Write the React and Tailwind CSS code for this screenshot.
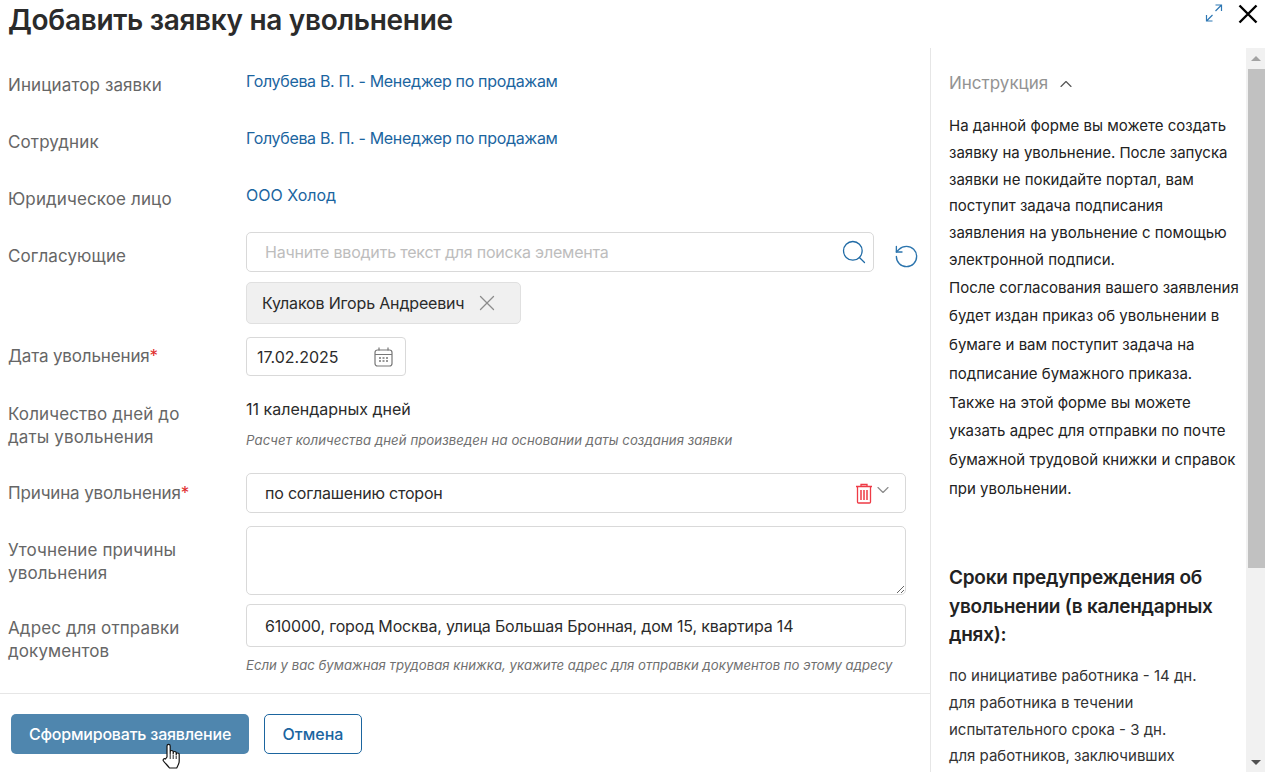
import React from "react";
import { Search, RotateCcw, ChevronUp, ChevronDown, X } from "lucide-react";

const Label = ({ children, required }) => (
  <div
    className={`w-[246px] shrink-0 pl-2 pr-12 text-[17px] leading-[23px] text-[#666666] ${
      required ? "tracking-[-0.15px]" : "tracking-[0.12px]"
    }`}
  >
    {children}
    {required && <span className="text-[#e02b2b]">*</span>}
  </div>
);

const LinkValue = ({ children }) => (
  <a className="text-[16px] leading-6 tracking-[-0.33px] text-[#1b659f]">{children}</a>
);

const ExpandIcon = () => (
  <svg width="18" height="18" viewBox="0 0 18 18" fill="none" stroke="#2f78b4" strokeWidth="1.2">
    <path d="M10.5 1h6v6M16.5 1l-6 6" />
    <path d="M1.5 11v6h6M1.5 17l6-6" />
  </svg>
);

const CloseIcon = () => (
  <svg width="20" height="20" viewBox="0 0 20 20" fill="none" stroke="#000000" strokeWidth="2.4">
    <path d="M1.5 1.5l17 17M18.5 1.5l-17 17" />
  </svg>
);

const CalendarIcon = () => (
  <svg width="19" height="20" viewBox="0 0 19 20" fill="none" stroke="#777777" strokeWidth="1.2">
    <rect x="1" y="3" width="17" height="16" rx="2.5" />
    <path d="M1 7.5h17M5 .5v3M14 .5v3" />
    <path d="M5 11h2M8.500 11h2M12 11h2M5 14h2M8.500 14h2M12 14h2" strokeWidth="1.500" />
  </svg>
);

const TrashIcon = () => (
  <svg width="18" height="21" viewBox="0 0 18 21" fill="none" stroke="#ee3b46" strokeWidth="1.300">
    <path d="M1 3.500h16M6 3.500V1.500h6v2" />
    <path d="M2.500 3.500v15.500a1 1 0 0 0 1 1h11a1 1 0 0 0 1-1V3.500" />
    <path d="M6 7v10M9 7v10M12 7v10" strokeWidth="1.500" />
  </svg>
);

const HandCursor = () => (
  <svg
    width="19"
    height="26"
    viewBox="0 0 19 26"
    className="absolute left-[162px] top-[743px]"
    fill="#ffffff"
    stroke="#111111"
    strokeWidth="1.200"
    strokeLinejoin="round"
  >
    <path d="M5 14V3a1.600 1.600 0 0 1 3.200 0v7.500V9a1.500 1.500 0 0 1 3 0v2V10a1.500 1.500 0 0 1 3 0v2V11.500a1.500 1.500 0 0 1 3 0V18c0 3-1.500 5-2.500 7H7.500C6 23 3.500 20.500 1.500 18c-1-1.500.5-3 2-2z" />
    <path d="M8.200 11v5M11.200 12v4M14.200 13v3" fill="none" strokeWidth="0.900" />
  </svg>
);

const Scrollbar = () => (
  <div className="w-[19px] shrink-0 flex flex-col items-end bg-[#f1f1f1]">
    <div className="w-full h-[21px] flex items-center justify-center">
      <div className="w-0 h-0 border-x-[5px] border-x-transparent border-b-[5px] border-b-[#a3a3a3]" />
    </div>
    <div className="w-[17px] h-[499px] bg-[#c1c1c1]" />
    <div className="flex-1" />
    <div className="w-full h-[19px] flex items-center justify-center">
      <div className="w-0 h-0 border-x-[5px] border-x-transparent border-t-[5px] border-t-[#505050]" />
    </div>
  </div>
);

const intro = [
  "На данной форме вы можете создать",
  "заявку на увольнение. После запуска",
  "заявки не покидайте портал, вам",
  "поступит задача подписания",
  "заявления на увольнение с помощью",
  "электронной подписи.",
];

const instruction = [
  "После согласования вашего заявления",
  "будет издан приказ об увольнении в",
  "бумаге и вам поступит задача на",
  "подписание бумажного приказа.",
  "Также на этой форме вы можете",
  "указать адрес для отправки по почте",
  "бумажной трудовой книжки и справок",
  "при увольнении.",
];

const terms = [
  "по инициативе работника - 14 дн.",
  "для работника в течении",
  "испытательного срока - 3 дн.",
  "для работников, заключивших",
];

export default function App() {
  return (
    <div
      className="relative h-[772px] w-full overflow-hidden bg-white flex flex-col"
      style={{ fontFamily: "Inter, 'Noto Sans', sans-serif" }}
    >
      {/* header */}
      <div className="h-[48px] shrink-0 flex items-start justify-between pl-2 pr-[7px]">
        <h1 className="text-[28px] leading-[40px] tracking-[-0.31px] font-semibold text-[#2b2b2b]">
          Добавить заявку на увольнение
        </h1>
        <div className="flex items-start gap-[15px] pt-1">
          <ExpandIcon />
          <CloseIcon />
        </div>
      </div>

      <div className="flex-1 flex min-h-0">
        {/* form column */}
        <div className="w-[930px] shrink-0 flex flex-col">
          <div className="flex-1">
            <div className="h-[57px] flex pt-[26px]">
              <Label>Инициатор заявки</Label>
              <div className="-mt-[5px]"><LinkValue>Голубева В. П. - Менеджер по продажам</LinkValue></div>
            </div>
            <div className="h-[57px] flex pt-[26px]">
              <Label>Сотрудник</Label>
              <div className="-mt-[5px]"><LinkValue>Голубева В. П. - Менеджер по продажам</LinkValue></div>
            </div>
            <div className="h-[57px] flex pt-[26px]">
              <Label>Юридическое лицо</Label>
              <div className="-mt-[5px]">
                <a className="text-[16px] leading-6 text-[#1b659f]">ООО Холод</a>
              </div>
            </div>

            <div className="flex mt-[13px]">
              <div className="pt-[13px]"><Label>Согласующие</Label></div>
              <div className="flex-1 min-w-0">
                <div className="flex items-center">
                  <div className="w-[628px] h-[40px] shrink-0 border border-[#d9d9d9] rounded-[5px] flex items-center pl-[18px] pr-[5px]">
                    <input
                      placeholder="Начните вводить текст для поиска элемента"
                      className="flex-1 outline-none text-[16px] tracking-[-0.2px] text-[#333333] placeholder:text-[#bdbdbd]"
                    />
                    <Search className="w-[28px] h-[28px] text-[#1f6aa5]" strokeWidth={1.100} />
                  </div>
                  <RotateCcw className="ml-[19px] mt-[8px] w-[27px] h-[27px] shrink-0 text-[#2b74ad]" strokeWidth={1.200} />
                </div>
                <div className="mt-[10px] w-[275px] h-[42px] bg-[#f0f0f0] border border-[#e0e0e0] rounded-[5px] flex items-center pl-[15px]">
                  <span className="text-[16px] tracking-[-0.17px] text-[#2b2b2b]">Кулаков Игорь Андреевич</span>
                  <X className="ml-[10px] w-[26px] h-[26px] text-[#8c8c8c]" strokeWidth={1.200} />
                </div>
              </div>
            </div>

            <div className="flex mt-[13px] items-center">
              <Label required>Дата увольнения</Label>
              <div className="w-[160px] h-[39px] border border-[#d9d9d9] rounded-[4px] flex items-center justify-between pl-[10px] pr-[12px]">
                <span className="text-[16px] text-[#2b2b2b]">17.02.2025</span>
                <CalendarIcon />
              </div>
            </div>

            <div className="flex mt-[21px]">
              <div className="pt-[6px]"><Label>Количество дней до даты увольнения</Label></div>
              <div>
                <div className="text-[16px] leading-6 text-[#2b2b2b]">11 календарных дней</div>
                <div className="mt-[9px] text-[13.200px] leading-5 tracking-[0.06px] italic text-[#707070]">
                  Расчет количества дней произведен на основании даты создания заявки
                </div>
              </div>
            </div>

            <div className="flex mt-[23px] items-center">
              <Label required>Причина увольнения</Label>
              <div className="w-[660px] h-[40px] border border-[#d9d9d9] rounded-[5px] flex items-center pl-[18px] pr-[12px]">
                <span className="flex-1 text-[16px] tracking-[-0.2px] text-[#2b2b2b]">по соглашению сторон</span>
                <TrashIcon />
                <ChevronDown className="-mt-[6px] w-[20px] h-[20px] text-[#8c8c8c]" strokeWidth={1.400} />
              </div>
            </div>

            <div className="flex mt-[13px]">
              <div className="pt-[13px]"><Label>Уточнение причины увольнения</Label></div>
              <textarea className="w-[660px] h-[69px] border border-[#d9d9d9] rounded-[5px] outline-none" />
            </div>

            <div className="flex mt-[9px]">
              <div className="pt-[13px]"><Label>Адрес для отправки документов</Label></div>
              <div>
                <div className="w-[660px] h-[43px] border border-[#d9d9d9] rounded-[4px] flex items-center pl-[18px]">
                  <span className="text-[16px] tracking-[-0.17px] text-[#2b2b2b]">
                    610000, город Москва, улица Большая Бронная, дом 15, квартира 14
                  </span>
                </div>
                <div className="mt-[8px] text-[13.200px] leading-5 italic text-[#707070] whitespace-nowrap">
                  Если у вас бумажная трудовая книжка, укажите адрес для отправки документов по этому адресу
                </div>
              </div>
            </div>
          </div>

          {/* footer */}
          <div className="h-[79px] shrink-0 border-t border-[#e6e6e6] flex items-start gap-[15px] pl-[11px] pt-[20px]">
            <button className="w-[238px] h-[40px] rounded-[5px] bg-[#4f86ae] text-white text-[16px] tracking-[-0.2px] font-medium">
              Сформировать заявление
            </button>
            <button className="w-[98px] h-[40px] rounded-[5px] border border-[#1b659f] text-[#1b659f] text-[16px] font-medium">
              Отмена
            </button>
          </div>
        </div>

        {/* instruction column */}
        <div className="flex-1 min-w-0 border-l border-[#e6e6e6] flex">
          <div className="flex-1 min-w-0 overflow-hidden pl-[18px] pt-[24px]">
            <div className="flex items-center gap-[8px] h-6">
              <span className="text-[17px] text-[#939393]">Инструкция</span>
              <ChevronUp className="w-[20px] h-[20px] text-[#555555]" strokeWidth={1.400} />
            </div>
            <div className="mt-[17px] text-[15px] leading-[26.800px] text-[#222222] whitespace-nowrap">
              {intro.map((line) => (
                <div key={line}>{line}</div>
              ))}
            </div>
            <div className="text-[15px] leading-[28.700px] text-[#222222] whitespace-nowrap">
              {instruction.map((line) => (
                <div key={line}>{line}</div>
              ))}
            </div>
            <h3 className="mt-[61px] text-[19px] leading-[28.500px] tracking-[-0.25px] font-semibold text-[#222222]">
              Сроки предупреждения об увольнении (в календарных днях):
            </h3>
            <div className="mt-[13px] text-[15px] leading-[26.800px] text-[#333333] whitespace-nowrap">
              {terms.map((line) => (
                <div key={line}>{line}</div>
              ))}
            </div>
          </div>
          <Scrollbar />
        </div>
      </div>

      <HandCursor />
    </div>
  );
}
